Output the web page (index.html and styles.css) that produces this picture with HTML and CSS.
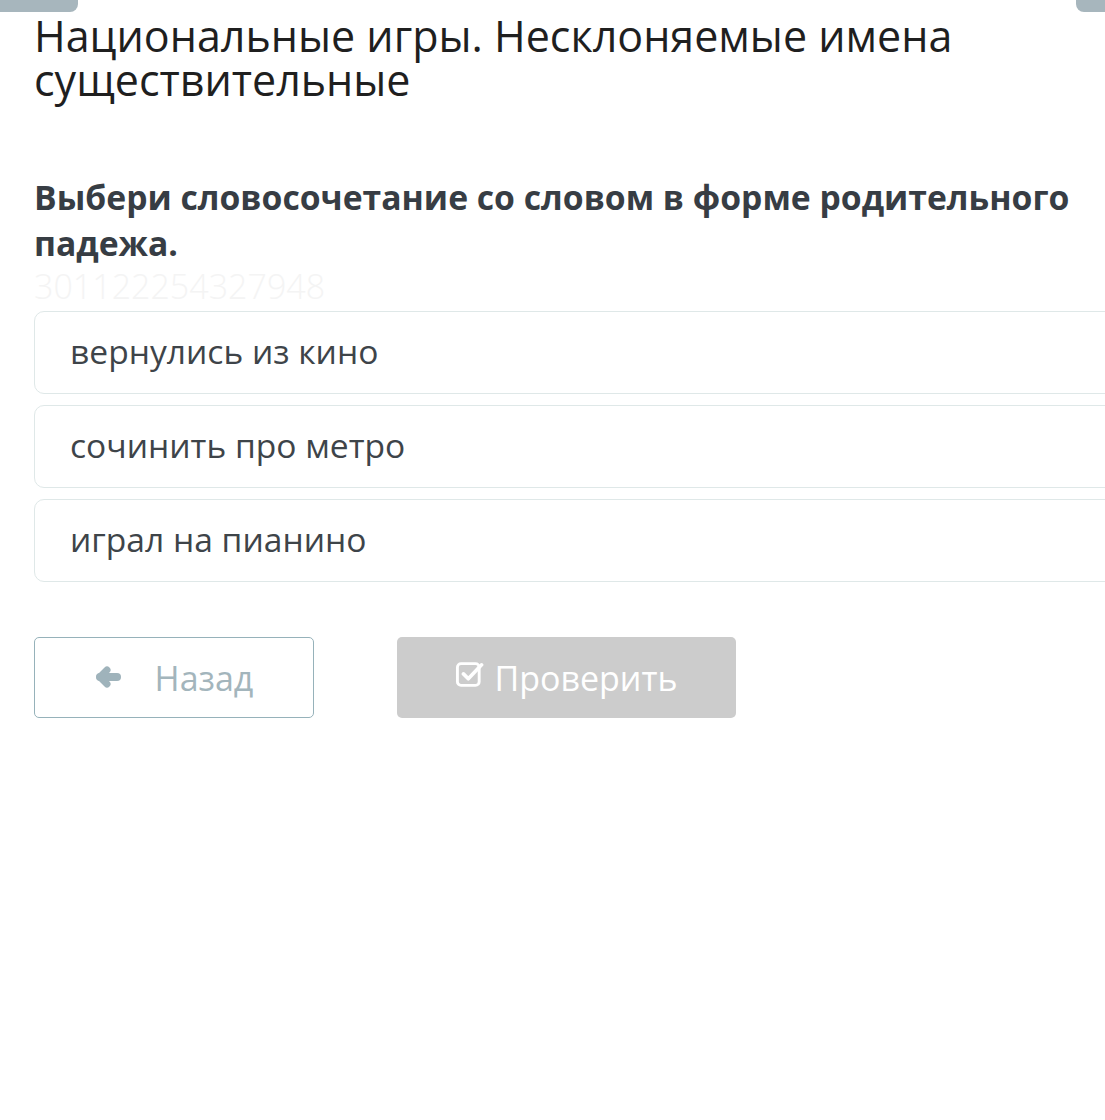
FILE: index.html
```html
<!DOCTYPE html>
<html lang="ru">
<head>
<meta charset="utf-8">
<link rel="stylesheet" href="styles.css">
</head>
<body>
<div class="tabs">
  <div class="tab tab-left"></div>
  <div class="tab tab-right"></div>
</div>
<main class="page">
  <h1 class="title">Национальные игры. Несклоняемые имена существительные</h1>
  <h2 class="question">Выбери словосочетание со словом в форме родительного падежа.</h2>
  <div class="qid">301122254327948</div>
  <div class="options">
    <div class="option">вернулись из кино</div>
    <div class="option">сочинить про метро</div>
    <div class="option">играл на пианино</div>
  </div>
  <div class="actions">
    <button class="btn btn-back">
      <svg class="arrow" viewBox="0 0 26 22" width="26" height="22"><path d="M5 11 L22 11" stroke="#9fb3bb" stroke-width="8" stroke-linecap="round"/><path d="M12 4 L5 11 L12 18" fill="none" stroke="#9fb3bb" stroke-width="7" stroke-linecap="round" stroke-linejoin="round"/></svg>
      <span>Назад</span>
    </button>
    <button class="btn btn-check">
      <svg class="check" viewBox="0 0 24 24" width="29" height="29"><rect x="2" y="3" width="18" height="18" rx="3" fill="none" stroke="#fff" stroke-width="2.4"/><path d="M7 11.5 L11 15.5 L22 4" fill="none" stroke="#fff" stroke-width="3" stroke-linecap="round" stroke-linejoin="round"/></svg>
      <span>Проверить</span>
    </button>
  </div>
</main>
</body>
</html>
```

FILE: styles.css
```css
html, body {
  margin: 0;
  padding: 0;
  background: #ffffff;
  font-family: "Open Sans", "Noto Sans", sans-serif;
  overflow: hidden;
}
.tabs {
  display: flex;
  justify-content: space-between;
  height: 12px;
}
.tab {
  background: #a7b6bd;
  height: 12px;
}
.tab-left {
  width: 78px;
  border-bottom-right-radius: 8px;
}
.tab-right {
  width: 29px;
  border-bottom-left-radius: 8px;
}
.page {
  padding-left: 34px;
}
.title {
  margin: 0;
  margin-top: 2px;
  font-weight: 400;
  font-size: 43px;
  line-height: 44px;
  color: #1f1f1f;
  width: 1050px;
}
.question {
  margin: 72px 0 0 0;
  font-weight: 700;
  font-size: 33.7px;
  line-height: 46px;
  color: #373d44;
  width: 1065px;
}
.qid {
  font-size: 34px;
  line-height: 40px;
  font-weight: 300;
  color: #f4f4f4;
  margin-top: 0px;
}
.options {
  display: flex;
  flex-direction: column;
  gap: 11px;
  margin-top: 5px;
}
.option {
  box-sizing: border-box;
  height: 83px;
  width: 1090px;
  border: 1.5px solid #dfe8e8;
  border-radius: 10px;
  padding-left: 35px;
  padding-bottom: 4px;
  display: flex;
  align-items: center;
  font-size: 33.6px;
  color: #3e4449;
}
.actions {
  display: flex;
  gap: 83px;
  margin-top: 55px;
}
.btn {
  box-sizing: border-box;
  height: 81px;
  font-family: "Open Sans", "Noto Sans", sans-serif;
  font-size: 34px;
  display: flex;
  align-items: center;
  justify-content: center;
  border-radius: 5px;
  padding: 0;
}
.btn-back {
  width: 280px;
  background: #fff;
  border: 1.5px solid #96b2ba;
  color: #a3b5bc;
  gap: 34px;
}
.btn-check {
  width: 339px;
  background: #cccccc;
  border: none;
  color: #ffffff;
  gap: 10px;
}
.arrow {
  display: block;
  margin-top: -2px;
}
.check {
  display: block;
  margin-top: -6px;
}
```
